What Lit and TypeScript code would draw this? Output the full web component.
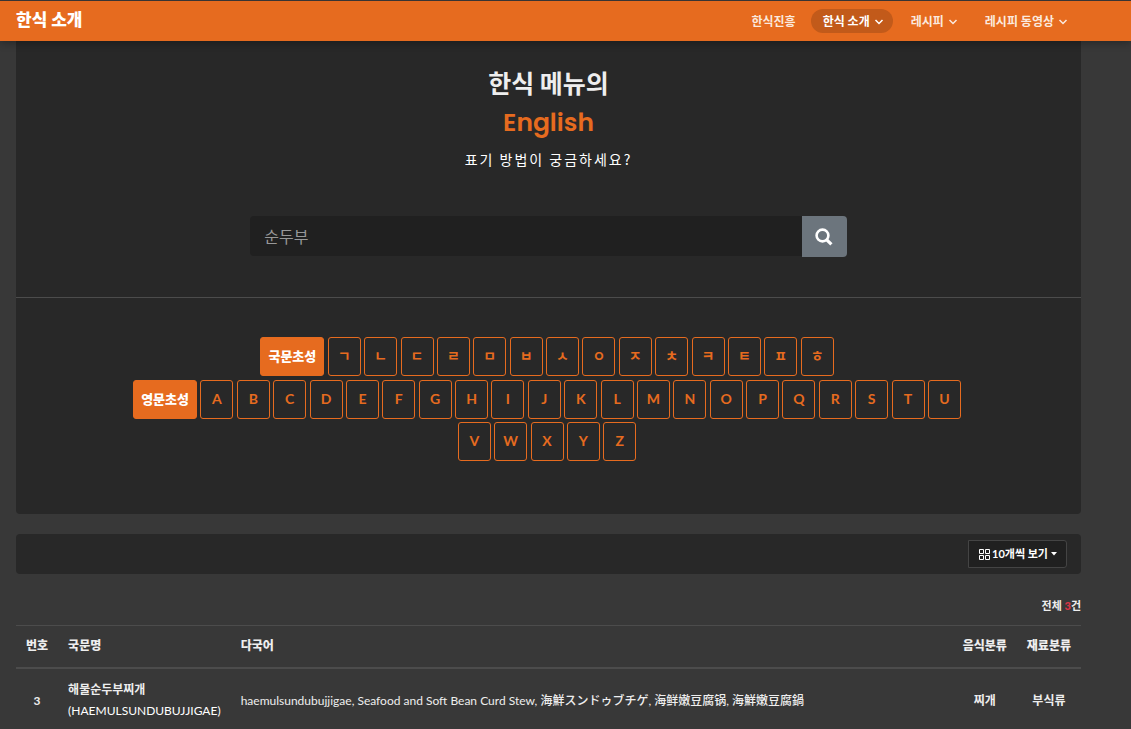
import { LitElement, html, css, svg } from "lit";
import { customElement, property, state } from "lit/decorators.js";

const FONT = css`Lato, "Noto Sans CJK KR", sans-serif`;

const chevron = svg`<path d="M1.5 3 L5 6.5 L8.5 3" fill="none" stroke="currentColor" stroke-width="1.5" />`;

@customElement("site-header")
class SiteHeader extends LitElement {
  static styles = css`
    :host {
      display: block;
      position: relative;
      z-index: 1;
      background: #e66b1f;
      border-top: 1px solid #383434;
      box-shadow: 0 2px 8px rgba(0, 0, 0, 0.3);
      font-family: ${FONT};
    }
    .bar {
      display: flex;
      align-items: center;
      justify-content: space-between;
      height: 40px;
      padding: 0 54px 0 16px;
    }
    .brand {
      color: #fff;
      font: 900 17px/36px "Noto Sans CJK KR", sans-serif;
      text-decoration: none;
      padding-bottom: 4px;
    }
    .menu {
      display: flex;
      align-items: center;
      gap: 6px;
    }
    .item {
      display: flex;
      align-items: center;
      gap: 4px;
      box-sizing: border-box;
      height: 24px;
      padding: 2px 9px 0 12px;
      border: 0;
      border-radius: 12px;
      background: none;
      color: #fbe9de;
      font: 700 12px/22px ${FONT};
      text-decoration: none;
    }
    .active {
      background: #c25a1a;
      color: #fff;
    }
    .arrow {
      width: 10px;
      height: 10px;
    }
  `;

  render() {
    const menus = ["한식 소개", "레시피", "레시피 동영상"];
    return html`
      <header class="bar">
        <a class="brand" href="#">한식 소개</a>
        <nav class="menu">
          <a class="item" href="#">한식진흥</a>
          ${menus.map(
            (name, i) => html`<button class="item ${i === 0 ? "active" : ""}" type="button" aria-haspopup="true">
              ${name}<svg class="arrow" viewBox="0 0 10 10" aria-hidden="true">${chevron}</svg>
            </button>`
          )}
        </nav>
      </header>
    `;
  }
}

@customElement("initial-filter")
class InitialFilter extends LitElement {
  @property() heading = "";
  @property({ attribute: false }) letters: string[] = [];

  static styles = css`
    :host {
      display: block;
      padding-right: 3px;
      text-align: center;
      font: 15px/22px "Noto Sans CJK KR", sans-serif;
    }
    .key {
      box-sizing: border-box;
      width: 33px;
      height: 39px;
      margin: 0 0 3px;
      padding: 0 0 2px;
      vertical-align: top;
      border: 1px solid #e66b1f;
      border-radius: 3px;
      background: none;
      color: #e66b1f;
      font: 700 14px/20px ${FONT};
    }
    .heading {
      width: 64px;
      background: #e66b1f;
      color: #fff;
      font-size: 13px;
      font-weight: 900;
    }
  `;

  render() {
    return html`<button class="key heading" type="button">${this.heading}</button>
      ${this.letters.map((l) => html`<button class="key" type="button">${l}</button> `)}`;
  }
}

interface Food {
  no: number;
  name: string;
  roman: string;
  english: string;
  japanese: string;
  simplified: string;
  traditional: string;
  kind: string;
  material: string;
}

@customElement("app-root")
class AppRoot extends LitElement {
  @state() private foods: Food[] = [
    {
      no: 3,
      name: "해물순두부찌개",
      roman: "haemulsundubujjigae",
      english: "Seafood and Soft Bean Curd Stew",
      japanese: "海鮮スンドゥブチゲ",
      simplified: "海鲜嫩豆腐锅",
      traditional: "海鮮嫩豆腐鍋",
      kind: "찌개",
      material: "부식류",
    },
  ];

  static styles = css`
    :host {
      display: block;
      box-sizing: border-box;
      min-height: 100vh;
      background: #383838;
      color: #eee;
      font: 12px/22px ${FONT};
    }
    .page {
      padding: 0 50px 0 16px;
    }
    .finder {
      background: #282828;
      border-radius: 0 0 4px 4px;
    }
    .intro {
      display: flex;
      flex-direction: column;
      align-items: center;
      padding: 22px 0 40px;
      border-bottom: 1px solid #4c4c4c;
    }
    .title {
      margin: 0;
      text-align: center;
      font: 700 25px/39px "Noto Sans CJK KR", sans-serif;
    }
    .accent {
      display: block;
      color: #e66b1f;
      font: 600 25px/41px Poppins, Inter, sans-serif;
    }
    .lead {
      margin: 5px 0 46px;
      font: 14px/22px "Noto Sans CJK KR", sans-serif;
      letter-spacing: 2px;
      color: #fff;
    }
    .search {
      display: flex;
      align-items: flex-start;
      width: 56%;
    }
    .query {
      box-sizing: border-box;
      flex: 1;
      min-width: 0;
      height: 40px;
      padding: 0 14px;
      border: 0;
      border-radius: 4px 0 0 4px;
      background: #202020;
      color: #eee;
      font: 16px/24px "Noto Sans CJK KR", sans-serif;
    }
    .query::placeholder {
      color: #989898;
      opacity: 1;
    }
    .submit {
      display: grid;
      place-items: center;
      width: 45px;
      height: 41px;
      padding: 0;
      border: 0;
      border-radius: 0 4px 4px 0;
      background: #6c757d;
      color: #fff;
    }
    .glass {
      width: 18px;
      height: 18px;
    }
    .initials {
      display: grid;
      gap: 1px;
      padding: 39px 10% 50px;
    }
    .tools {
      display: flex;
      justify-content: flex-end;
      margin-top: 20px;
      padding: 6px 14px;
      border-radius: 4px;
      background: #282828;
    }
    .count {
      display: flex;
      align-items: center;
      gap: 2px;
      height: 26px;
      padding: 0 8px 0 10px;
      border: 1px solid #444;
      border-radius: 0 3px 3px 0;
      background: #202020;
      color: #fff;
    }
    .grid {
      width: 11px;
      height: 11px;
    }
    .size {
      appearance: none;
      padding: 0;
      border: 0;
      background: none;
      color: inherit;
      font: 700 11px/20px ${FONT};
    }
    .caret {
      width: 8px;
      height: 4px;
    }
    .total {
      margin: 21px 0 8px;
      text-align: right;
      font-size: 11px;
      font-weight: 700;
    }
    .number {
      color: #dc3545;
      font-weight: 900;
    }
    .foods {
      width: 100%;
      border-collapse: collapse;
    }
    .foods th,
    .foods td {
      padding: 10px;
      text-align: left;
      font-weight: 700;
      line-height: 21px;
    }
    .foods th {
      padding: 9px 10px 11px;
      border-top: 1px solid #4c4c4c;
      border-bottom: 2px solid #4c4c4c;
      font-weight: 900;
    }
    .foods .mid {
      text-align: center;
      white-space: nowrap;
    }
    .foods .text {
      width: 100%;
      font-weight: 400;
    }
    .roman {
      display: block;
      font-weight: 400;
      text-transform: uppercase;
      color: #fff;
    }
    .cjk {
      font-weight: 500;
    }
  `;

  render() {
    return html`
      <site-header></site-header>
      <main class="page">
        <section class="finder">
          <div class="intro">
            <h1 class="title">한식 메뉴의 <span class="accent">English</span></h1>
            <p class="lead">표기 방법이 궁금하세요?</p>
            <form class="search" role="search" @submit=${(e: Event) => e.preventDefault()}>
              <input class="query" type="text" aria-label="메뉴 검색" placeholder="순두부" />
              <button class="submit" type="submit" aria-label="검색">
                <svg class="glass" viewBox="0 0 18 18" fill="none" stroke="currentColor" aria-hidden="true">
                  <circle cx="7.5" cy="7.5" r="5.9" stroke-width="2.6" />
                  <path d="M11.8 11.8 L16.4 16.4" stroke-width="3.2" />
                </svg>
              </button>
            </form>
          </div>
          <div class="initials">
            <initial-filter heading="국문초성" .letters=${[..."ㄱㄴㄷㄹㅁㅂㅅㅇㅈㅊㅋㅌㅍㅎ"]}></initial-filter>
            <initial-filter heading="영문초성" .letters=${[..."ABCDEFGHIJKLMNOPQRSTUVWXYZ"]}></initial-filter>
          </div>
        </section>

        <div class="tools">
          <label class="count">
            <svg class="grid" viewBox="0 0 11 11" fill="none" stroke="currentColor" aria-hidden="true">
              <path d="M.5 .5h4v4h-4z M6.5 .5h4v4h-4z M.5 6.5h4v4h-4z M6.5 6.5h4v4h-4z" />
            </svg>
            <select class="size" aria-label="페이지당 개수">
              <option>10개씩 보기</option>
              <option>20개씩 보기</option>
              <option>30개씩 보기</option>
            </select>
            <svg class="caret" viewBox="0 0 8 4" aria-hidden="true"><path d="M1 0h6L4 3.5z" fill="currentColor" /></svg>
          </label>
        </div>

        <p class="total">전체 <span class="number">3</span>건</p>

        <table class="foods">
          <thead>
            <tr>
              <th class="mid">번호</th>
              <th>국문명</th>
              <th>다국어</th>
              <th class="mid">음식분류</th>
              <th class="mid">재료분류</th>
            </tr>
          </thead>
          <tbody>
            ${this.foods.map(
              (f) => html`<tr>
                <td class="mid">${f.no}</td>
                <td>${f.name}<span class="roman">(${f.roman})</span></td>
                <td class="text">
                  ${f.roman}, ${f.english}, <span class="cjk" lang="ja">${f.japanese}</span>,
                  <span class="cjk" lang="zh-CN">${f.simplified}</span>, <span class="cjk" lang="zh-TW">${f.traditional}</span>
                </td>
                <td class="mid">${f.kind}</td>
                <td class="mid">${f.material}</td>
              </tr>`
            )}
          </tbody>
        </table>
      </main>
    `;
  }
}
